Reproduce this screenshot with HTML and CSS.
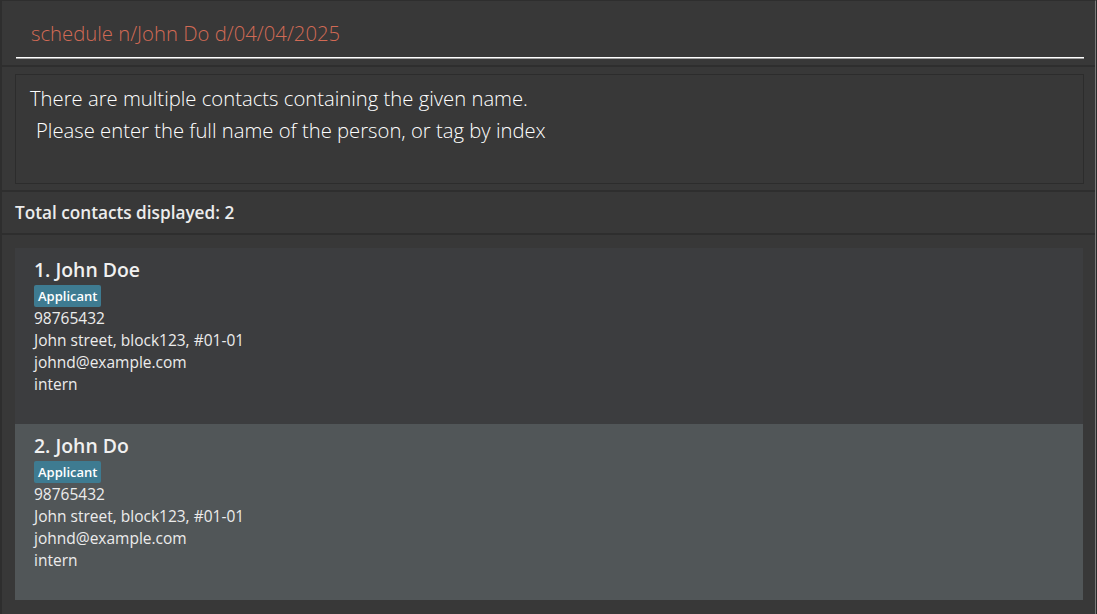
FILE: index.html
```html
<!DOCTYPE html>
<html lang="en">
<head>
<meta charset="utf-8">
<title>Address Book</title>
<link rel="stylesheet" href="styles.css">
</head>
<body>
<div class="app">
  <div class="command">
    <div class="command-input">schedule n/John Do d/04/04/2025</div>
  </div>
  <div class="sep"></div>
  <div class="result">
    <div class="result-box">
      <div class="result-line">There are multiple contacts containing the given name.</div>
      <div class="result-line indent">Please enter the full name of the person, or tag by index</div>
    </div>
  </div>
  <div class="sep"></div>
  <div class="status">Total contacts displayed: 2</div>
  <div class="sep"></div>
  <div class="list">
    <div class="card odd">
      <div class="name">1. John Doe</div>
      <div class="tags"><span class="tag">Applicant</span></div>
      <div class="field">98765432</div>
      <div class="field">John street, block123, #01-01</div>
      <div class="field">johnd@example.com</div>
      <div class="field">intern</div>
    </div>
    <div class="card even">
      <div class="name">2. John Do</div>
      <div class="tags"><span class="tag">Applicant</span></div>
      <div class="field">98765432</div>
      <div class="field">John street, block123, #01-01</div>
      <div class="field">johnd@example.com</div>
      <div class="field">intern</div>
    </div>
  </div>
</div>
</body>
</html>
```

FILE: styles.css
```css
html, body {
  margin: 0;
  padding: 0;
  background: #2b2b2b;
}

body {
  font-family: "Open Sans", "Liberation Sans", sans-serif;
  color: #ffffff;
}

.app {
  box-sizing: border-box;
  width: 1096px;
  height: 614px;
  background: #383838;
  border-top: 1px solid #2e2e2e;
  border-left: 2px solid #2e2e2e;
  border-right: 1px solid #7a7a7a;
  display: flex;
  flex-direction: column;
}

.command {
  height: 64px;
  box-sizing: border-box;
  padding: 0 11px 7px 14px;
  display: flex;
  flex-direction: column;
  justify-content: flex-end;
}

.command-input {
  color: #d26a55;
  font-size: 20.3px;
  font-weight: 300;
  line-height: 28px;
  padding: 0 0 10px 15px;
  border-bottom: 1px solid #ffffff;
  box-shadow: 0 1px 0 #a0a0a0;
}

.sep {
  height: 2px;
  background: #2e2e2e;
  flex: none;
}

.result {
  height: 123px;
  box-sizing: border-box;
  padding: 7px 11px 6px 13px;
  flex: none;
}

.result-box {
  height: 100%;
  box-sizing: border-box;
  border: 1px solid #2c2c2c;
  padding: 7px 14px;
}

.result-line {
  font-size: 20.25px;
  font-weight: 300;
  line-height: 32px;
  color: #ffffff;
}

.result-line.indent {
  padding-left: 6px;
}

.status {
  height: 41px;
  flex: none;
  box-sizing: border-box;
  padding-left: 13px;
  display: flex;
  align-items: center;
  font-size: 17.2px;
  font-weight: 600;
  color: #ececec;
}

.list {
  flex: 1;
  padding: 13px 12px 0 13px;
}

.card {
  height: 176px;
  box-sizing: border-box;
  padding: 8px 19px 0 19px;
}

.card.odd {
  background: #3c3d3f;
}

.card.even {
  background: #515658;
}

.name {
  font-size: 19.4px;
  font-weight: 600;
  line-height: 27px;
  color: #f0f0f0;
}

.tags {
  display: flex;
  margin-top: 2px;
  margin-bottom: 0;
}

.tag {
  background: #3e7b91;
  color: #ffffff;
  font-size: 13px;
  font-weight: 600;
  line-height: 22px;
  padding: 0 4px;
  border-radius: 2px;
}

.field {
  font-size: 15.5px;
  line-height: 22px;
  color: #ececec;
}
```
